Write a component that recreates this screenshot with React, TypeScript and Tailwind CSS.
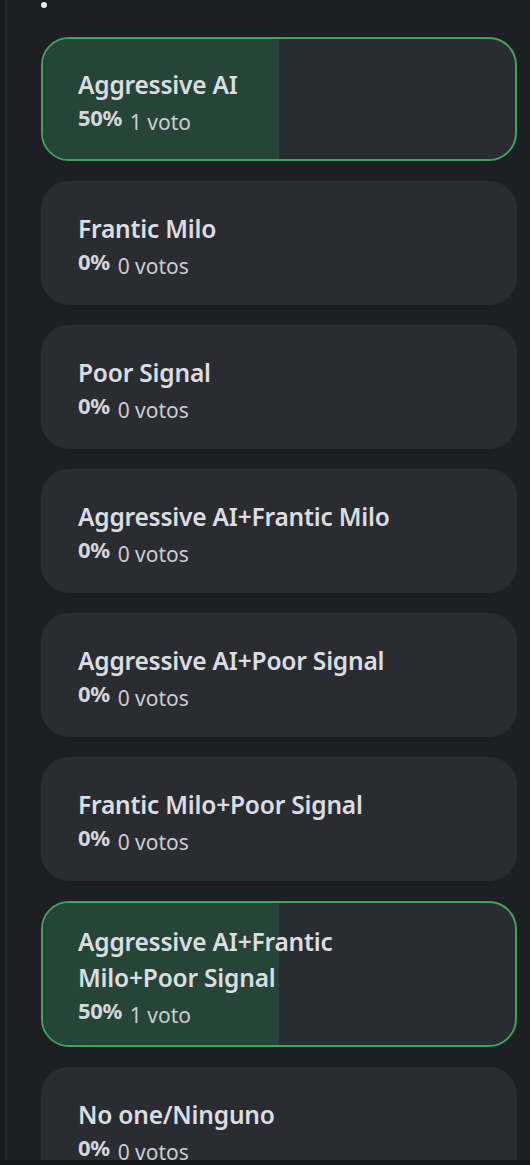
import React from "react";

type Opt = { title: string; pct: number; votes: string; voted?: boolean };

const options: Opt[] = [
  { title: "Aggressive AI", pct: 50, votes: "1 voto", voted: true },
  { title: "Frantic Milo", pct: 0, votes: "0 votos" },
  { title: "Poor Signal", pct: 0, votes: "0 votos" },
  { title: "Aggressive AI+Frantic Milo", pct: 0, votes: "0 votos" },
  { title: "Aggressive AI+Poor Signal", pct: 0, votes: "0 votos" },
  { title: "Frantic Milo+Poor Signal", pct: 0, votes: "0 votos" },
  { title: "Aggressive AI+Frantic\nMilo+Poor Signal", pct: 50, votes: "1 voto", voted: true },
  { title: "No one/Ninguno", pct: 0, votes: "0 votos" },
];

function Card({ o }: { o: Opt }) {
  return (
    <div
      className={
        "relative shrink-0 w-[476px] min-h-[124px] rounded-[28px] border-2 overflow-hidden bg-[#2b2c32] flex flex-col justify-center pt-[21px] pb-[19px] pl-[35px] pr-[20px] " +
        (o.voted ? "border-[#3ba55c]" : "border-[#2b2c32]")
      }
    >
      {o.pct > 0 && (
        <div
          className="absolute left-0 top-0 bottom-0 bg-[#274438]"
          style={{ width: `${o.pct}%` }}
        />
      )}
      <div className="relative whitespace-pre-line text-[24.5px] leading-[36px] font-semibold text-[#dbdee1] tracking-[-0.2px]">
        {o.title}
      </div>
      <div className="relative flex items-end h-[30px] gap-[8px]">
        <span className="text-[22px] leading-[22px] font-bold text-[#d4d7db] mb-[5px] tracking-[-0.4px]">{o.pct}%</span>
        <span className="text-[21px] leading-[22px] font-normal text-[#c9cdd1]">{o.votes}</span>
      </div>
    </div>
  );
}

export default function App() {
  return (
    <div
      className="w-[530px] h-[1165px] overflow-hidden bg-[#1e1f24] flex flex-col"
      style={{ fontFamily: '"Noto Sans", "Open Sans", sans-serif' }}
    >
      <div className="flex h-[1160px] overflow-hidden">
        <div className="w-[5px] shrink-0 bg-[#1a1b1f]" />
        <div className="w-[2px] shrink-0 bg-[#26272c]" />
        <div className="flex-1 flex flex-col">
          <div className="h-[37px] shrink-0 pl-[34px] pt-[2px]">
            <div className="w-[6px] h-[6px] rounded-full bg-[#e8eaee]" />
          </div>
          <div className="flex flex-col gap-[20px] pl-[34px]">
            {options.map((o, i) => (
              <Card key={i} o={o} />
            ))}
          </div>
        </div>
      </div>
      <div className="h-[5px] bg-[#151619]" />
    </div>
  );
}
